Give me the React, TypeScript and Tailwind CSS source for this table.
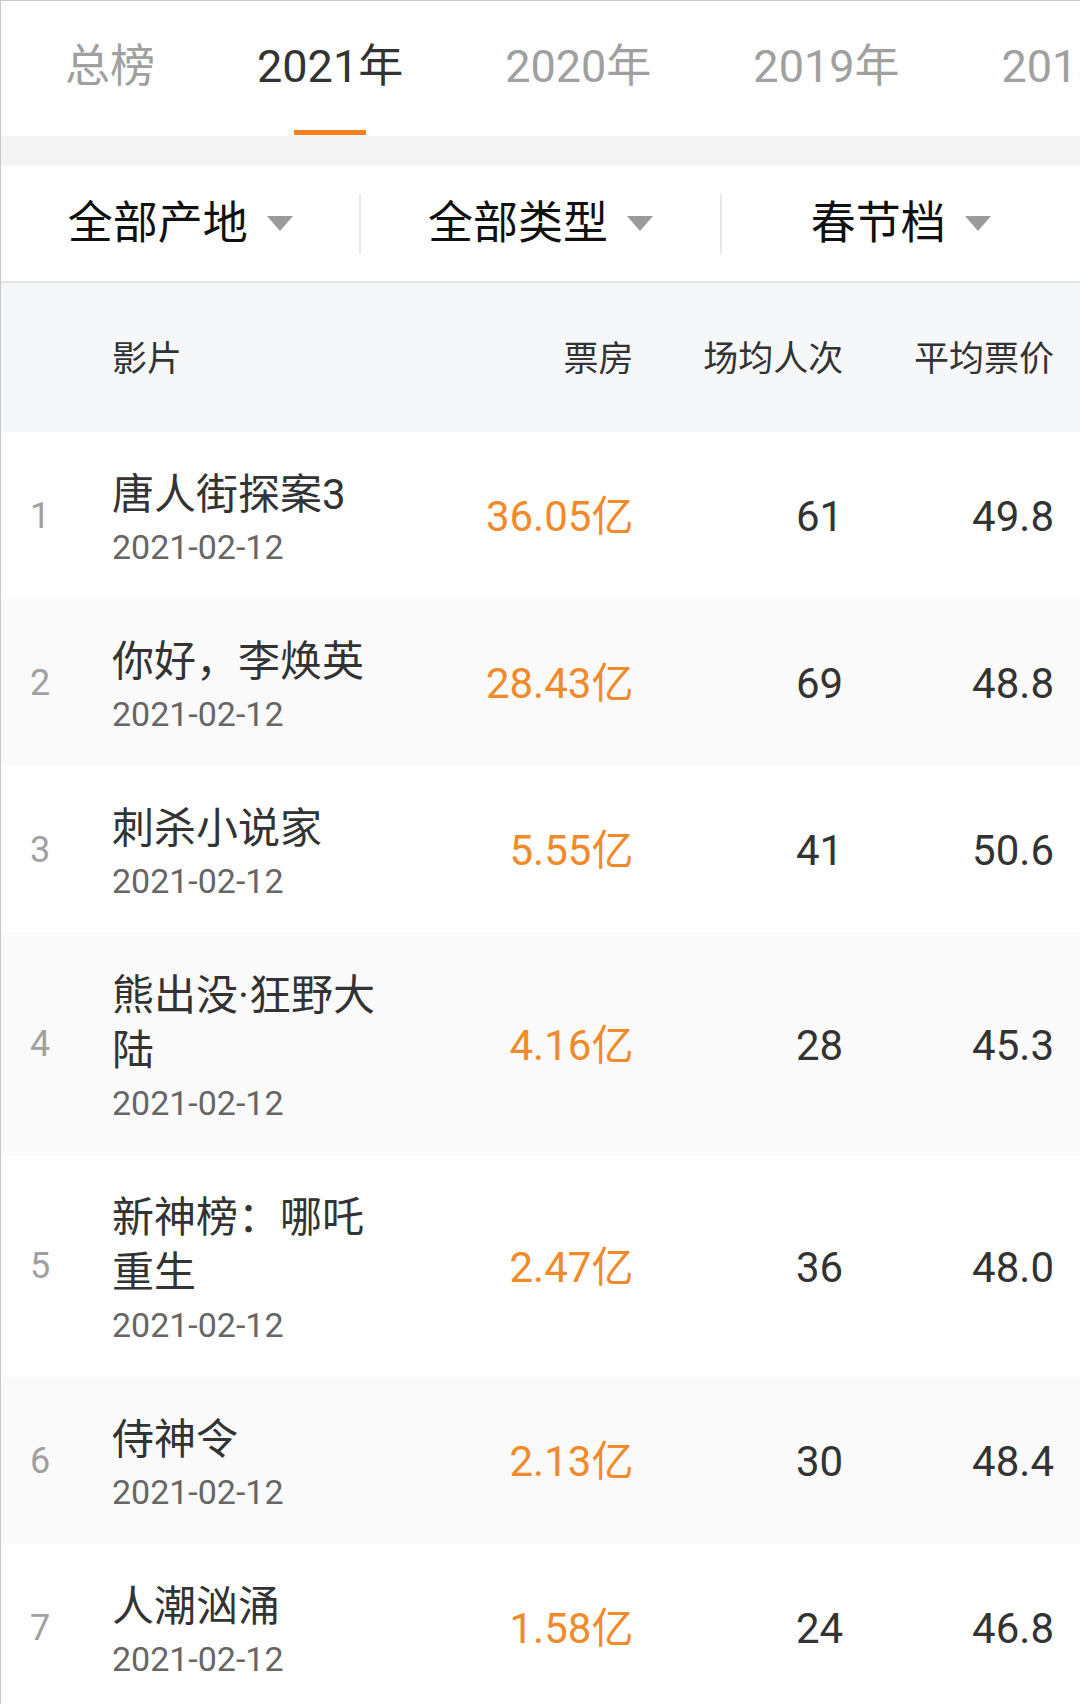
const tabs = ['总榜', '2021年', '2020年', '2019年', '2018年'];
const filters = ['全部产地', '全部类型', '春节档'];

type Movie = {
  rank: number;
  name: string;
  date: string;
  boxOffice: string;
  perShow: string;
  price: string;
};

const movies: Movie[] = [
  { rank: 1, name: '唐人街探案3', date: '2021-02-12', boxOffice: '36.05亿', perShow: '61', price: '49.8' },
  { rank: 2, name: '你好，李焕英', date: '2021-02-12', boxOffice: '28.43亿', perShow: '69', price: '48.8' },
  { rank: 3, name: '刺杀小说家', date: '2021-02-12', boxOffice: '5.55亿', perShow: '41', price: '50.6' },
  { rank: 4, name: '熊出没·狂野大陆', date: '2021-02-12', boxOffice: '4.16亿', perShow: '28', price: '45.3' },
  { rank: 5, name: '新神榜：哪吒重生', date: '2021-02-12', boxOffice: '2.47亿', perShow: '36', price: '48.0' },
  { rank: 6, name: '侍神令', date: '2021-02-12', boxOffice: '2.13亿', perShow: '30', price: '48.4' },
  { rank: 7, name: '人潮汹涌', date: '2021-02-12', boxOffice: '1.58亿', perShow: '24', price: '46.8' },
];

const font = { fontFamily: 'Roboto, "Noto Sans CJK SC", sans-serif' };

function Caret() {
  return <span className="w-0 h-0 border-l-[13px] border-r-[13px] border-t-[15px] border-l-transparent border-r-transparent border-t-[#9b9b9b]" />;
}

export default function App() {
  return (
    <div className="w-[1080px] h-[1704px] overflow-hidden bg-white border-l border-t border-[#c8c8c8]" style={font}>
      {/* year tabs */}
      <nav className="h-[135px] flex gap-[102px] pl-[64px] overflow-hidden whitespace-nowrap">
        {tabs.map((tab, i) => (
          <div key={tab} className="relative shrink-0">
            <span className={`block mt-[42px] text-[45px] leading-[48px] ${i === 1 ? 'text-[#333]' : 'text-[#a0a0a0]'}`}>{tab}</span>
            {i === 1 && <span className="absolute left-1/2 -translate-x-1/2 top-[129px] w-[72px] h-[5px] bg-[#f5821f]" />}
          </div>
        ))}
      </nav>
      <div className="h-[30px] bg-[#f4f4f4]" />

      {/* filters */}
      <div className="h-[117px] flex items-center border-b-2 border-[#e4e4e4]">
        {filters.map((label, i) => (
          <div key={label} className="contents">
            {i > 0 && <span className="w-[2px] h-[60px] bg-[#e8e8e8]" />}
            <div className="flex-1 h-full flex items-center justify-center gap-[19px]">
              <span className="text-[45px] leading-[52px] text-[#111]">{label}</span>
              <Caret />
            </div>
          </div>
        ))}
      </div>

      {/* table header */}
      <div className="h-[149px] pt-[6px] bg-[#f6f7f9] flex items-center text-[35px] text-[#333] pr-[26px]">
        <span className="w-[111px]" />
        <span className="w-[282px]">影片</span>
        <span className="w-[240px] text-right">票房</span>
        <span className="w-[210px] text-right">场均人次</span>
        <span className="w-[211px] text-right">平均票价</span>
      </div>

      {/* rows */}
      {movies.map((m, i) => (
        <div key={m.rank} className={`flex items-center pr-[26px] ${i % 2 === 1 ? 'bg-[#fafafa]' : 'bg-white'}`}>
          <span className="w-[111px] pl-[29px] text-[36px] text-[#a0a0a0]">{m.rank}</span>
          <div className="w-[282px] pt-[35px] pb-[26px]">
            <p className="text-[42px] leading-[55px] text-[#333]">{m.name}</p>
            <p className="text-[34px] leading-[51px] text-[#666]">{m.date}</p>
          </div>
          <span className="w-[240px] pt-[2px] text-right text-[42px] text-[#f08a2a]">{m.boxOffice}</span>
          <span className="w-[210px] pt-[2px] text-right text-[42px] text-[#333]">{m.perShow}</span>
          <span className="w-[211px] pt-[2px] text-right text-[42px] text-[#333]">{m.price}</span>
        </div>
      ))}
    </div>
  );
}
